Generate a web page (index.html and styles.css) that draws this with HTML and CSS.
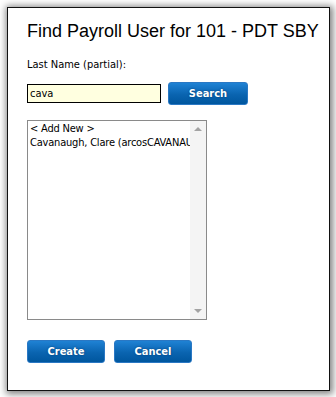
FILE: index.html
```html
<!DOCTYPE html>
<html lang="en">
<head>
    <meta charset="UTF-8">
    <meta name="viewport" content="width=device-width, initial-scale=1.0">
    <title>Find Payroll User</title>
    <link rel="stylesheet" href="styles.css">
</head>
<body>

<div class="dialog">
    <h1 class="title">Find Payroll User for 101 - PDT SBY</h1>

    <label class="label" for="lastName">Last Name (partial):</label>
    <div class="search-row">
        <input id="lastName" class="text-input" type="text" value="cava">
        <button class="btn btn-search">Search</button>
    </div>

    <div class="listbox">
        <div class="list-items">
            <div class="list-item">&lt; Add New &gt;</div>
            <div class="list-item">Cavanaugh, Clare (arcosCAVANAUGH)</div>
        </div>
        <div class="scrollbar">
            <span class="arrow arrow-up"></span>
            <span class="arrow arrow-down"></span>
        </div>
    </div>

    <div class="actions">
        <button class="btn">Create</button>
        <button class="btn">Cancel</button>
    </div>
</div>

</body>
</html>
```

FILE: styles.css
```css
body {
    margin: 0;
    background-color: #fff;
    font-family: Tahoma, "DejaVu Sans Condensed", sans-serif;
}
.dialog {
    width: 302px;
    height: 370px;
    margin: 7px;
    padding: 12px 0 0 19px;
    background-color: #fff;
    border: 1px solid #111;
    box-shadow: 1px 1px 7px 2px rgba(0, 0, 0, 0.5);
}
.title {
    margin: 0;
    font-family: Arial, "Liberation Sans", sans-serif;
    font-size: 18px;
    font-weight: normal;
    line-height: 22px;
    color: #000;
    white-space: nowrap;
}
.label {
    display: block;
    margin-top: 16px;
    font-size: 11px;
    line-height: 14px;
    color: #000;
}
.search-row {
    display: flex;
    align-items: center;
    gap: 7px;
    margin-top: 10px;
}
.text-input {
    width: 128px;
    height: 17px;
    margin: 0;
    padding: 0 2px;
    border: 1px solid #000;
    background-color: #ffffe0;
    font-family: Tahoma, "DejaVu Sans Condensed", sans-serif;
    font-size: 11px;
    color: #000;
    outline: none;
}
.btn {
    width: 78px;
    height: 23px;
    padding: 0;
    border: 1px solid #2a78c4;
    border-radius: 3px;
    background: linear-gradient(#1f82d4, #0a64b0 55%, #00569e);
    color: #fff;
    font-family: Tahoma, "DejaVu Sans Condensed", sans-serif;
    font-size: 11px;
    font-weight: bold;
    text-shadow: 0 0 2px #003a70;
    cursor: pointer;
}
.btn-search {
    width: 80px;
}
.listbox {
    display: flex;
    width: 178px;
    height: 198px;
    margin-top: 15px;
    border: 1px solid #8a8a8a;
    background-color: #fff;
    overflow: hidden;
}
.list-items {
    flex: 1;
    padding: 1px 0 0 2px;
    overflow: hidden;
}
.list-item {
    font-size: 11px;
    letter-spacing: -0.2px;
    line-height: 14px;
    color: #000;
    white-space: nowrap;
}
.scrollbar {
    display: flex;
    flex-direction: column;
    justify-content: space-between;
    align-items: center;
    width: 16px;
    padding: 6px 0;
    background-color: #f4f4f4;
}
.arrow {
    width: 0;
    height: 0;
    border-left: 4px solid transparent;
    border-right: 4px solid transparent;
}
.arrow-up {
    border-bottom: 4px solid #a3a3a3;
}
.arrow-down {
    border-top: 4px solid #a3a3a3;
}
.actions {
    display: flex;
    gap: 9px;
    margin-top: 20px;
}
```
